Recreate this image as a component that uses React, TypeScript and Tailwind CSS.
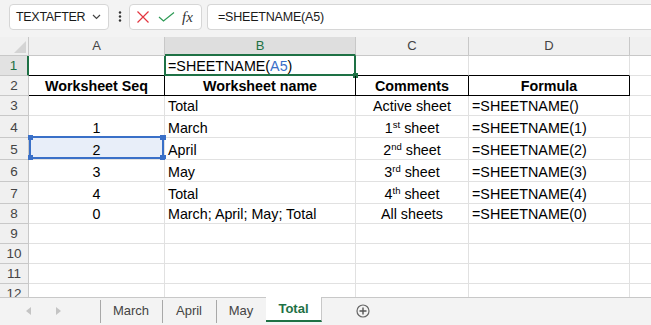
import React from "react";

const GREEN = "#1e7145";
const BLUE = "#3a70c8";

type Row = {
  h: string;
  a?: React.ReactNode;
  b?: React.ReactNode;
  c?: React.ReactNode;
  d?: React.ReactNode;
};

const sup = (n: string, s: string, rest: string) => (
  <>
    {n}
    <sup className="text-[9.5px] relative -top-[5px]">{s}</sup> {rest}
  </>
);

const rows: Row[] = [
  { h: "h-[20px]" },
  { h: "h-[20px]", a: "Worksheet Seq", b: "Worksheet name", c: "Comments", d: "Formula" },
  { h: "h-[20px]", b: "Total", c: "Active sheet", d: "=SHEETNAME()" },
  { h: "h-[22px]", a: "1", b: "March", c: sup("1", "st", "sheet"), d: "=SHEETNAME(1)" },
  { h: "h-[22px]", a: "2", b: "April", c: sup("2", "nd", "sheet"), d: "=SHEETNAME(2)" },
  { h: "h-[22px]", a: "3", b: "May", c: sup("3", "rd", "sheet"), d: "=SHEETNAME(3)" },
  { h: "h-[22px]", a: "4", b: "Total", c: sup("4", "th", "sheet"), d: "=SHEETNAME(4)" },
  { h: "h-[20px]", a: "0", b: "March; April; May; Total", c: "All sheets", d: "=SHEETNAME(0)" },
  { h: "h-[20px]" },
  { h: "h-[20px]" },
  { h: "h-[20px]" },
  { h: "h-[20px]" },
];

function Toolbar() {
  return (
    <div className="h-[37px] bg-[#f3f3f3] flex items-start pt-[4px] shrink-0">
      {/* name box */}
      <div className="ml-[9px] w-[100px] h-[26px] bg-white border border-[#d6d6d6] rounded-[4px] flex items-center pl-[6px] pr-[6px] justify-between">
        <span className="text-[12.5px] tracking-[-0.3px] text-[#1a1a1a]">TEXTAFTER</span>
        <svg width="9" height="6" viewBox="0 0 9 6" className="mr-[1px]">
          <path d="M1 1 L4.5 4.5 L8 1" fill="none" stroke="#444" strokeWidth="1.2" />
        </svg>
      </div>
      {/* vertical dots */}
      <svg width="4" height="14" viewBox="0 0 4 14" className="ml-[9px] mt-[6px]">
        <circle cx="2" cy="2.5" r="1.2" fill="#333" />
        <circle cx="2" cy="6.5" r="1.2" fill="#333" />
        <circle cx="2" cy="10.5" r="1.2" fill="#333" />
      </svg>
      {/* cancel / enter / fx */}
      <div className="ml-[7px] w-[73px] h-[26px] bg-white border border-[#d6d6d6] rounded-[4px] flex items-center">
        <svg width="14" height="12" viewBox="0 0 14 12" className="ml-[6px]">
          <path d="M1.5 0.5 L12.5 11.5 M12.5 0.5 L1.5 11.5" stroke="#e3353f" strokeWidth="1.2" fill="none" />
        </svg>
        <svg width="17" height="10" viewBox="0 0 17 10" className="ml-[8px]">
          <path d="M1 5 L5.5 9 L16 0.5" stroke="#2d9a55" strokeWidth="1.2" fill="none" />
        </svg>
        <span className="ml-[7px] text-[15px] italic text-[#333] leading-none" style={{ fontFamily: '"Liberation Serif", serif' }}>
          fx
        </span>
      </div>
      {/* formula input */}
      <div className="ml-[5px] flex-1 h-[26px] bg-white border border-[#d6d6d6] border-r-0 rounded-l-[4px] flex items-center pl-[10px]">
        <span className="text-[12.5px] tracking-[-0.2px] text-[#1a1a1a]">=SHEETNAME(A5)</span>
      </div>
    </div>
  );
}

function ColumnHeader() {
  const cols = [
    { w: "w-[136px]", l: "A" },
    { w: "w-[191px]", l: "B", sel: true },
    { w: "w-[113px]", l: "C" },
    { w: "w-[161px]", l: "D" },
  ];
  return (
    <div className="h-[19px] flex shrink-0 bg-[#f3f3f3]">
      <div className="w-[29px] border-r border-b border-[#c8c8c8] relative bg-[#f0f0f0]">
        <svg width="12" height="12" viewBox="0 0 12 12" className="absolute right-[2px] bottom-[2px]">
          <path d="M12 0 L12 12 L0 12 Z" fill="#d4d4d4" />
        </svg>
      </div>
      {cols.map((c) => (
        <div
          key={c.l}
          className={
            c.sel
              ? `${c.w} border-r border-[#c8c8c8] border-b-2 border-b-[#1e7145] bg-[#dedede] flex items-end justify-center text-[13px] text-[#1e7145] leading-[16px]`
              : `${c.w} border-r border-b border-[#c8c8c8] bg-[#f0f0f0] flex items-end justify-center text-[13px] text-[#444] leading-[16px] pb-[1px]`
          }
        >
          {c.l}
        </div>
      ))}
      <div className="flex-1 border-b border-[#c8c8c8] bg-[#f0f0f0]" />
    </div>
  );
}

function Grid() {
  return (
    <div className="flex-1 overflow-hidden bg-white">
      {rows.map((r, i) => {
        const n = i + 1;
        const isHead = n === 2;
        const above = n === 1;
        const gridB = "border-[#e1e1e1]";
        const bottom = above || isHead ? "border-b-black" : "";
        const right = isHead ? "border-r-black" : "";
        const font = isHead ? "font-bold" : "";
        return (
          <div key={n} className={`${r.h} flex`}>
            <div
              className={
                n === 1
                  ? "w-[29px] shrink-0 bg-[#e2e2e2] border-b border-[#c8c8c8] border-r-2 border-r-[#1e7145] flex items-end justify-center text-[13.5px] leading-[16px] text-[#1e7145] pb-[1px]"
                  : "w-[29px] shrink-0 bg-[#f0f0f0] border-b border-r border-[#c8c8c8] flex items-end justify-center text-[13.5px] leading-[16px] text-[#444] pb-[1px]"
              }
            >
              {n}
            </div>
            {/* A */}
            <div
              className={`w-[136px] shrink-0 relative border-r border-b ${gridB} ${bottom} ${right} ${font} ${
                n === 5 ? "bg-[#e8eef9]" : ""
              } flex items-end justify-center pb-[1px] leading-[16px]`}
            >
              {r.a}
              {n === 5 && (
                <div className="absolute left-0 right-0 -top-[2px] bottom-0 border-2 border-[#3a70c8]">
                  <div className="absolute -left-[3px] -top-[3px] w-[5px] h-[5px] bg-[#3a70c8]" />
                  <div className="absolute -right-[4px] -top-[3px] w-[6px] h-[5px] bg-[#3a70c8]" />
                  <div className="absolute -left-[3px] -bottom-[3px] w-[5px] h-[5px] bg-[#3a70c8]" />
                  <div className="absolute -right-[4px] -bottom-[3px] w-[6px] h-[5px] bg-[#3a70c8]" />
                </div>
              )}
            </div>
            {/* B */}
            <div
              className={`w-[191px] shrink-0 relative border-r border-b ${gridB} ${bottom} ${right} ${font} flex items-end ${
                isHead ? "justify-center" : "pl-[3px]"
              } pb-[1px] leading-[16px] whitespace-nowrap`}
            >
              {n === 1 ? (
                <>
                  =SHEETNAME(<span style={{ color: BLUE }}>A5</span>)
                  <div className="absolute -left-px -top-[2px] -right-px -bottom-px border-2" style={{ borderColor: GREEN }}>
                    <div className="absolute -right-[4px] -bottom-[4px] w-[5px] h-[5px]" style={{ backgroundColor: GREEN }} />
                  </div>
                </>
              ) : (
                r.b
              )}
            </div>
            {/* C */}
            <div
              className={`w-[113px] shrink-0 border-r border-b ${gridB} ${bottom} ${right} ${font} flex items-end justify-center pb-[1px] leading-[16px] whitespace-nowrap`}
            >
              <span>{r.c}</span>
            </div>
            {/* D */}
            <div
              className={`w-[161px] shrink-0 border-r border-b ${gridB} ${bottom} ${right} ${font} flex items-end ${
                isHead ? "justify-center" : "pl-[3px]"
              } pb-[1px] leading-[16px] whitespace-nowrap`}
            >
              {r.d}
            </div>
            <div className={`flex-1 border-b ${gridB}`} />
          </div>
        );
      })}
    </div>
  );
}

function Tabs() {
  const tabs = [
    { name: "March", w: "w-[62px]" },
    { name: "April", w: "w-[54px]" },
    { name: "May", w: "w-[50px]" },
  ];
  return (
    <div className="h-[28px] shrink-0 bg-[#f3f3f3] border-t border-[#c8c8c8] flex items-start text-[13px] text-[#444]">
      <div className="w-[100px] h-[25px] flex items-center">
        <svg width="6" height="8" viewBox="0 0 6 8" className="ml-[26px]">
          <path d="M5 0 L5 8 L0 4 Z" fill="#c4c4c4" />
        </svg>
        <svg width="6" height="8" viewBox="0 0 6 8" className="ml-[23px]">
          <path d="M1 0 L1 8 L6 4 Z" fill="#c4c4c4" />
        </svg>
      </div>
      {tabs.map((t) => (
        <div key={t.name} className={`${t.w} h-[25px] flex items-center justify-center relative`}>
          <div className="absolute left-0 top-[2px] bottom-0 w-px bg-[#a8a8a8]" />
          {t.name}
        </div>
      ))}
      <div className="w-[56px] h-[25px] bg-white border-r border-[#c8c8c8] border-b-2 border-b-[#1e7145] flex items-center justify-center font-bold text-[#1e7145] -mt-px pt-px">
        Total
      </div>
      <svg width="14" height="14" viewBox="0 0 14 14" className="ml-[34px] mt-[6px]">
        <circle cx="7" cy="7" r="6" fill="none" stroke="#666" strokeWidth="1.2" />
        <path d="M7 3.5 V10.5 M3.5 7 H10.5" stroke="#555" strokeWidth="1.4" />
      </svg>
    </div>
  );
}

export default function App() {
  return (
    <div
      className="w-[651px] h-[325px] overflow-hidden flex flex-col text-[14.3px] text-black"
      style={{ fontFamily: '"Liberation Sans", Arial, sans-serif' }}
    >
      <Toolbar />
      <ColumnHeader />
      <Grid />
      <Tabs />
    </div>
  );
}
